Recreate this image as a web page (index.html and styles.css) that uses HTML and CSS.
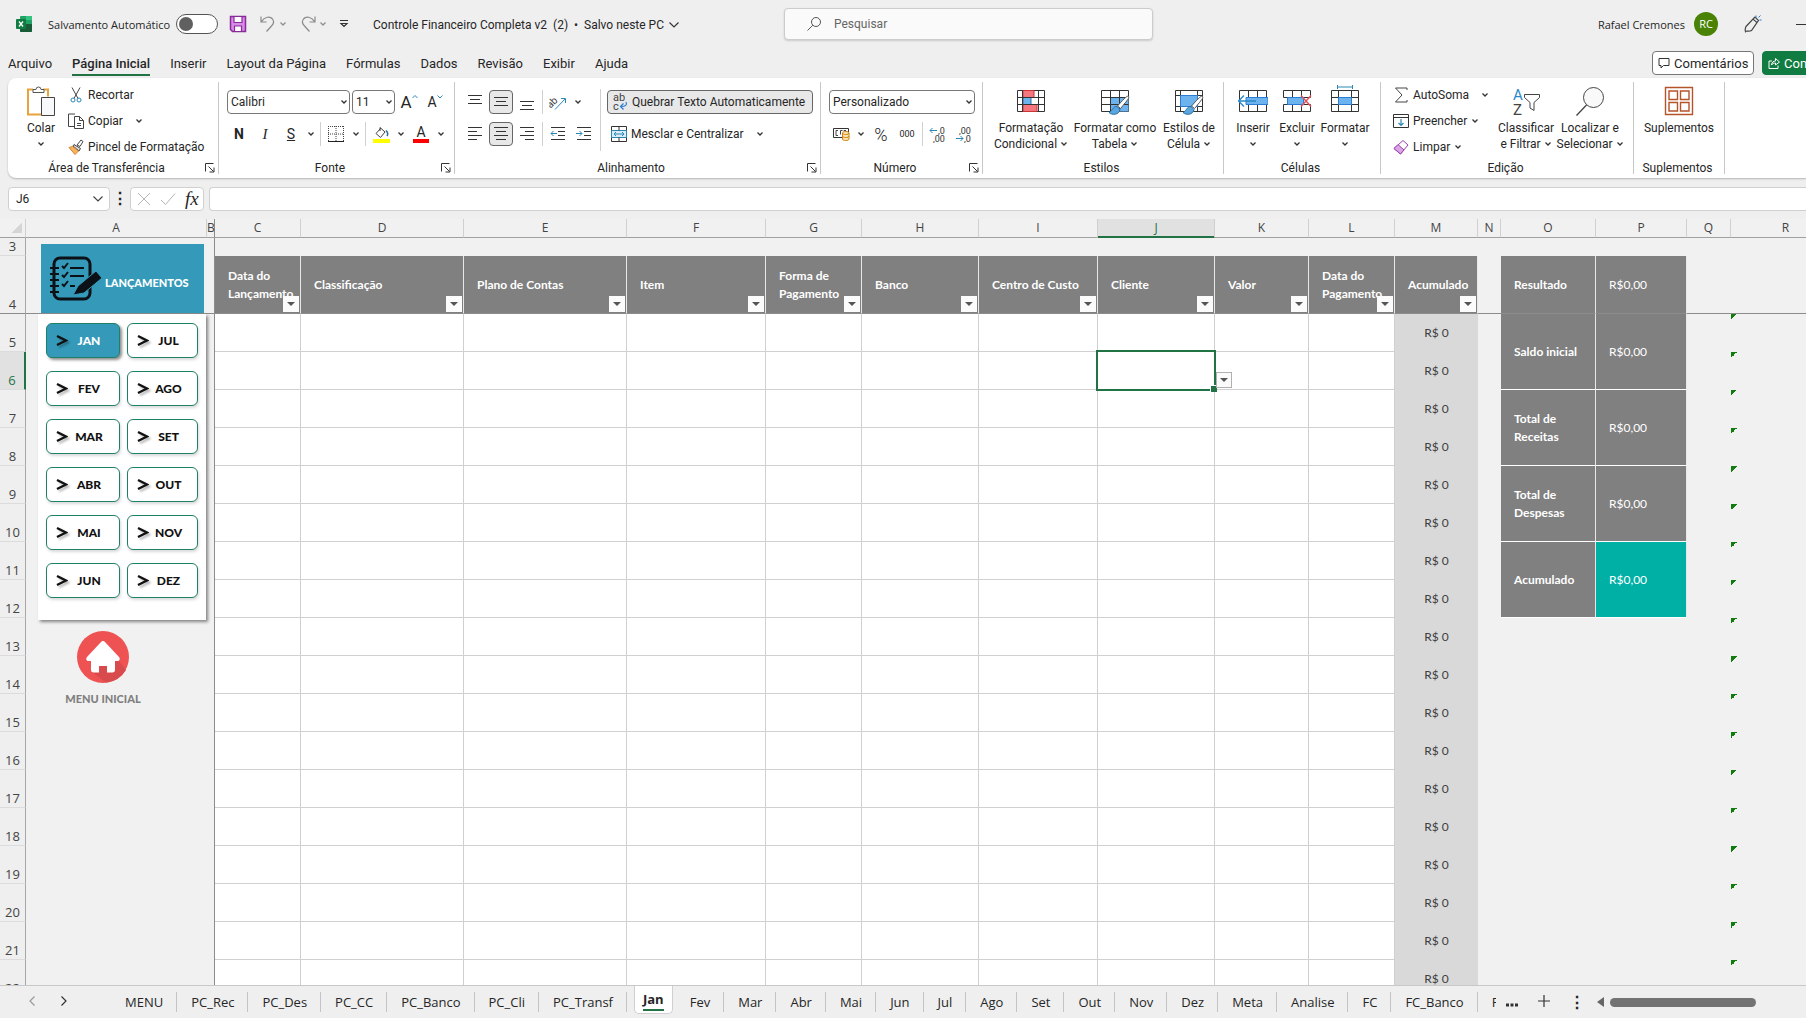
FILE: index.html
```html
<!DOCTYPE html>
<html lang="pt-BR">
<head>
    <meta charset="UTF-8">
    <meta name="viewport" content="width=device-width, initial-scale=1.0">
    <title>Controle Financeiro Completa v2</title>
    <link rel="stylesheet" href="styles.css">
</head>
<body>
    <!-- Shared icons -->
    <svg class="defs" width="0" height="0">
        <symbol id="chev" viewBox="0 0 8 8"><path d="M1.5 2.5 4 5l2.500-2.500" fill="none" stroke="#333" stroke-width="1.300"/></symbol>
        <symbol id="launch" viewBox="0 0 10 10"><path d="M.5 8.500v-8h8M3.500 3.500l5 5M9 4.500V9H4.500" fill="none" stroke="#333"/></symbol>
        <symbol id="arrow" viewBox="0 0 12 14"><path d="M1 2l9 4.500L1 11" fill="none" stroke="#111" stroke-width="2.400"/></symbol>
        <symbol id="brush" viewBox="0 0 22 22"><path d="M20.500 1.500c1 1 0 2.500-8 12l-3-2.500c8-9 10-10.500 11-9.500z" fill="#fff" stroke="#555"/><path d="M9 11.500c-4-.5-4 4-8 6 3 3 10 2.500 11-3z" fill="#5aa7e0" stroke="#2b6ca3"/></symbol>
    </svg>

    <header class="titlebar">
        <svg class="app-icon" width="16" height="16" viewBox="0 0 16 16"><rect x="4" width="12" height="16" rx="1" fill="#21a366"/><path d="M10 0h5a1 1 0 0 1 1 1v3h-6z" fill="#33c481"/><path d="M4 8h12v7a1 1 0 0 1-1 1H5a1 1 0 0 1-1-1z" fill="#185c37"/><rect y="3" width="10" height="10" rx="1" fill="#107c41"/><path d="M3 5.500l4 5M7 5.500l-4 5" stroke="#fff" stroke-width="1.300"/></svg>
        <label class="autosave" for="autosave">Salvamento Automático</label>
        <input class="switch" type="checkbox" role="switch" id="autosave">
        <div class="quick">
            <button aria-label="Salvar"><svg width="18" height="18" viewBox="0 0 18 18"><path d="M1.500 1.500h15v15h-13l-2-2z" fill="#d98be8" stroke="#8a2a9b" stroke-width="1.500"/><path d="M5 1.500h8v6H5zM5.500 11h7v5.500h-7z" fill="#fff" stroke="#8a2a9b" stroke-width="1.200"/></svg></button>
            <button class="split" aria-label="Desfazer"><svg width="18" height="18" viewBox="0 0 18 18"><path d="M2 1.500V7h5.500M2.300 6.700C6 1.500 11 1 13.500 4c2.200 2.800.5 5.500-1 7L7.500 16.500" fill="none" stroke="#8a8a8a" stroke-width="1.200"/></svg><svg class="chev faint"><use href="#chev"/></svg></button>
            <button class="split" aria-label="Refazer"><svg width="18" height="18" viewBox="0 0 18 18"><path d="M16 1.500V7h-5.500M15.700 6.700C12 1.500 7 1 4.500 4c-2.200 2.800-.5 5.500 1 7l5 5.500" fill="none" stroke="#8a8a8a" stroke-width="1.200"/></svg><svg class="chev faint"><use href="#chev"/></svg></button>
            <button aria-label="Personalizar"><svg width="10" height="10" viewBox="0 0 10 10"><path d="M1 1.500h8M2 4.500l3 3 3-3z" fill="none" stroke="#333" stroke-width="1.200"/></svg></button>
        </div>
        <button class="doc">Controle Financeiro Completa v2&nbsp; (2) &nbsp;•&nbsp; Salvo neste PC <svg width="12" height="12" viewBox="0 0 12 12"><path d="M1.500 3.500 6 8l4.500-4.500" fill="none" stroke="#333" stroke-width="1.200"/></svg></button>
        <label class="search">
            <svg width="16" height="16" viewBox="0 0 16 16"><circle cx="10" cy="6" r="4.500" fill="none" stroke="#555"/><path d="M6.800 9.200 1.500 14.500" stroke="#555"/></svg>
            <input type="search" placeholder="Pesquisar" aria-label="Pesquisar">
        </label>
        <div class="account">
            <span>Rafael Cremones</span>
            <span class="avatar">RC</span>
            <svg width="18" height="18" viewBox="0 0 18 18"><path d="M2 11.500 9 4l4 3.500-5.500 8C5.500 17 2 15.500 1.500 16.500 1 15 1.500 12.500 2 11.500zM9 4l2-2 3.500 3.500L13 7.500" fill="none" stroke="#444" stroke-width="1.200"/><path d="M12 .5v2M14.500 2.500l2-2M15.500 5h2" stroke="#2b7cd3"/></svg>
            <span class="minimize"></span>
        </div>
    </header>

    <nav class="tabs">
        <a href="#arquivo">Arquivo</a>
        <a href="#inicio" class="active">Página Inicial</a>
        <a href="#inserir">Inserir</a>
        <a href="#layout">Layout da Página</a>
        <a href="#formulas">Fórmulas</a>
        <a href="#dados">Dados</a>
        <a href="#revisao">Revisão</a>
        <a href="#exibir">Exibir</a>
        <a href="#ajuda">Ajuda</a>
        <div class="tab-actions">
            <button class="comments"><svg width="12" height="12" viewBox="0 0 12 12"><path d="M1 1.500h10v7H5.500L3 11V8.500H1z" fill="none" stroke="#333"/></svg>Comentários</button>
            <button class="share"><svg width="12" height="12" viewBox="0 0 12 12"><path d="M4 4H1v7.500h9V8.500M3.500 8c.3-3 2-4 4-4V1.500L11.500 5 7.500 8V6c-2 0-3 .5-4 2z" fill="none" stroke="#fff"/></svg>Compartilhamento</button>
        </div>
    </nav>

    <section class="ribbon">
        <div class="group clipboard">
            <div class="body">
                <button class="big"><svg class="art" viewBox="0 0 30 32"><path d="M7 4.500H2v25h14M17 4.500h5v7" fill="none" stroke="#e8a33d" stroke-width="2"/><path d="M7 7.500V4.500h3a2.500 2.500 0 0 1 5 0h3v3z" fill="#fff" stroke="#555"/><path d="M15.500 12.500h13v18h-13z" fill="#f7f9fb" stroke="#444"/></svg>Colar<svg class="chev"><use href="#chev"/></svg></button>
                <div class="list">
                    <button><svg width="16" height="16" viewBox="0 0 16 16"><path d="M4 .5l6 11M12 .5l-6 11" stroke="#444"/><circle cx="5" cy="13" r="2" fill="none" stroke="#2b88b5"/><circle cx="11" cy="13" r="2" fill="none" stroke="#2b88b5"/></svg>Recortar</button>
                    <button><svg width="16" height="16" viewBox="0 0 16 16"><path d="M6 13.500H.5V1H7M6.500 3.500h5l4 4v8h-9zM11.500 3.500v4h4M9 10.500h4M9 12.500h4" fill="none" stroke="#444"/></svg>Copiar<svg class="chev far"><use href="#chev"/></svg></button>
                    <button><svg width="16" height="16" viewBox="0 0 16 16"><path d="M9 6l4-5 2 1.500-3 5z" fill="#fff" stroke="#444"/><path d="M6 5.500l6.500 4L11 12 5 7z" fill="#ddd" stroke="#444"/><path d="M4.500 7.500 10.500 12 7 15.500 1 8.500z" fill="#f3b562" stroke="#d9822b"/></svg>Pincel de Formatação</button>
                </div>
            </div>
            <div class="foot"><span>Área de Transferência</span><svg class="launch"><use href="#launch"/></svg></div>
        </div>

        <div class="group font">
            <div class="body rows">
                <div class="row">
                    <span class="field family"><select aria-label="Fonte"><option>Calibri</option></select><svg class="chev"><use href="#chev"/></svg></span>
                    <span class="field size"><select aria-label="Tamanho"><option>11</option></select><svg class="chev"><use href="#chev"/></svg></span>
                    <button class="tool grow" aria-label="Aumentar fonte"><span>A</span><svg width="6" height="6" viewBox="0 0 6 6"><path d="M.5 4 3 1.500 5.500 4" fill="none" stroke="#2b88b5"/></svg></button>
                    <button class="tool shrink" aria-label="Diminuir fonte"><span>A</span><svg width="6" height="6" viewBox="0 0 6 6"><path d="M.5 1.500 3 4l2.500-2.500" fill="none" stroke="#2b88b5"/></svg></button>
                </div>
                <div class="row">
                    <button class="tool bold">N</button>
                    <button class="tool italic">I</button>
                    <button class="tool underline">S</button>
                    <button class="drop" aria-label="Mais sublinhados"><svg class="chev"><use href="#chev"/></svg></button>
                    <i class="sep"></i>
                    <button class="tool" aria-label="Bordas"><svg width="16" height="16" viewBox="0 0 16 16"><path d="M.5 0v15M8 0v15M15.500 0v15M0 .5h16M0 8h16" stroke="#444" stroke-dasharray="1 1"/><path d="M0 15.500h16" stroke="#222"/></svg></button>
                    <button class="drop" aria-label="Mais bordas"><svg class="chev"><use href="#chev"/></svg></button>
                    <i class="sep"></i>
                    <button class="tool" aria-label="Cor de preenchimento"><svg width="17" height="17" viewBox="0 0 17 17"><path d="M8 2 3 7.500l4.500 4L12 6 7 1.500V5" fill="none" stroke="#444"/><path d="M13 4.500c2 2 2 4 1 5.500" fill="none" stroke="#2b6ca3" stroke-width="1.500"/><rect y="13" width="17" height="4" fill="#ff0"/></svg></button>
                    <button class="drop" aria-label="Mais cores"><svg class="chev"><use href="#chev"/></svg></button>
                    <button class="tool color">A</button>
                    <button class="drop" aria-label="Mais cores da fonte"><svg class="chev"><use href="#chev"/></svg></button>
                </div>
            </div>
            <div class="foot"><span>Fonte</span><svg class="launch"><use href="#launch"/></svg></div>
        </div>

        <div class="group align">
            <div class="body">
                <div class="rows">
                    <div class="row">
                        <button class="tool" aria-label="Alinhar em cima"><svg width="16" height="16" viewBox="0 0 16 16"><path d="M1 1.500h14M3 5.500h10M1 9.500h14" stroke="#333"/></svg></button>
                        <button class="tool on" aria-label="Alinhar no meio"><svg width="16" height="16" viewBox="0 0 16 16"><path d="M1 3.500h14M3 7.500h10M1 11.500h14" stroke="#333"/></svg></button>
                        <button class="tool" aria-label="Alinhar embaixo"><svg width="16" height="16" viewBox="0 0 16 16"><path d="M1 7.500h14M3 11.500h10M1 15.500h14" stroke="#333"/></svg></button>
                        <i class="sep"></i>
                        <button class="tool" aria-label="Orientação"><svg width="18" height="16" viewBox="0 0 18 16"><text x="-3" y="10" font-size="10" fill="#444" transform="rotate(-45 5 7)">ab</text><path d="M6 15.500 16 5M12 4.500h4.500V9" fill="none" stroke="#2b88b5"/></svg></button>
                        <button class="drop" aria-label="Mais orientações"><svg class="chev"><use href="#chev"/></svg></button>
                    </div>
                    <div class="row">
                        <button class="tool" aria-label="Alinhar à esquerda"><svg width="16" height="16" viewBox="0 0 16 16"><path d="M1 1.500h14M1 5.500h9M1 9.500h14M1 13.500h9" stroke="#333"/></svg></button>
                        <button class="tool on" aria-label="Centralizar"><svg width="16" height="16" viewBox="0 0 16 16"><path d="M1 1.500h14M3 5.500h10M1 9.500h14M3 13.500h10" stroke="#333"/></svg></button>
                        <button class="tool" aria-label="Alinhar à direita"><svg width="16" height="16" viewBox="0 0 16 16"><path d="M1 1.500h14M6 5.500h9M1 9.500h14M6 13.500h9" stroke="#333"/></svg></button>
                        <i class="sep"></i>
                        <button class="tool" aria-label="Diminuir recuo"><svg width="16" height="16" viewBox="0 0 16 16"><path d="M1 1.500h14M8 5.500h7M8 9.500h7M1 13.500h14" stroke="#333"/><path d="M7 7.500H1M3.500 5 1 7.500 3.500 10" fill="none" stroke="#2b88b5"/></svg></button>
                        <button class="tool" aria-label="Aumentar recuo"><svg width="16" height="16" viewBox="0 0 16 16"><path d="M1 1.500h14M8 5.500h7M8 9.500h7M1 13.500h14" stroke="#333"/><path d="M0 7.500h6M3.500 5 6 7.500 3.500 10" fill="none" stroke="#2b88b5"/></svg></button>
                    </div>
                </div>
                <i class="sep tall"></i>
                <div class="rows">
                    <button class="wide on"><svg width="16" height="18" viewBox="0 0 16 18"><text x="1" y="8" font-size="11" fill="#444">ab</text><text x="1" y="17" font-size="11" fill="#444">c</text><path d="M14 9c1.500 3-.5 4.500-5 4.500M11.500 10.500 8.500 13.500l3 3" fill="none" stroke="#2b7cd3" stroke-width="1.200"/></svg>Quebrar Texto Automaticamente</button>
                    <button class="wide"><svg width="16" height="16" viewBox="0 0 16 16"><path d="M.5.5h15v15H.5z" fill="#fff" stroke="#333"/><path d="M.5 4.500h15v7H.5z" fill="#d9ecf8" stroke="#2b88b5"/><path d="M8 .5v4M8 11.500v4" stroke="#333"/><path d="M3 8h10M5 6 3 8l2 2M11 6l2 2-2 2" fill="none" stroke="#2b88b5"/></svg>Mesclar e Centralizar<svg class="chev far"><use href="#chev"/></svg></button>
                </div>
            </div>
            <div class="foot"><span>Alinhamento</span><svg class="launch"><use href="#launch"/></svg></div>
        </div>

        <div class="group number">
            <div class="body rows">
                <div class="row">
                    <span class="field format"><select aria-label="Formato de número"><option>Personalizado</option></select><svg class="chev"><use href="#chev"/></svg></span>
                </div>
                <div class="row">
                    <button class="tool" aria-label="Contábil"><svg width="17" height="14" viewBox="0 0 17 14"><path d="M9 10.500H.5v-9h15V5" fill="none" stroke="#333"/><path d="M5 3.500H3v5h2M9.500 3.500h-2v4M13 3.500h-2v1" fill="none" stroke="#444"/><path d="M9.500 6v6c0 2 6.500 2 6.500 0V6c0-2-6.500-2-6.500 0zc0 2 6.500 2 6.500 0M9.500 9c0 2 6.500 2 6.500 0" fill="#fde3b0" stroke="#c98414"/></svg></button>
                    <button class="drop" aria-label="Mais moedas"><svg class="chev"><use href="#chev"/></svg></button>
                    <button class="tool percent">%</button>
                    <button class="tool thousand">000</button>
                    <i class="sep"></i>
                    <button class="tool" aria-label="Aumentar casas decimais"><svg width="18" height="17" viewBox="0 0 18 17"><text x="9" y="8" font-size="9" fill="#333">,0</text><text x="4" y="16" font-size="9" fill="#333">,00</text><path d="M8 4.500H1M3.500 2 1 4.500 3.500 7" fill="none" stroke="#2b88b5"/></svg></button>
                    <button class="tool" aria-label="Diminuir casas decimais"><svg width="18" height="17" viewBox="0 0 18 17"><text x="4" y="8" font-size="9" fill="#333">,00</text><text x="9" y="16" font-size="9" fill="#333">,0</text><path d="M1 12.500h7M5.500 10 8 12.500 5.500 15" fill="none" stroke="#2b88b5"/></svg></button>
                </div>
            </div>
            <div class="foot"><span>Número</span><svg class="launch"><use href="#launch"/></svg></div>
        </div>

        <div class="group styles">
            <div class="body">
                <button class="big"><svg class="art" viewBox="0 0 30 32"><path d="M1.500 5.500h27v21h-27z" fill="#fff" stroke="#333"/><path d="M7 5.500h11v7H7zM7 19.500h14v7H7z" fill="#f4777f" stroke="#c33"/><path d="M7 12.500h8v7H7z" fill="#6db3ee" stroke="#2b6ca3"/><path d="M1.500 12.500h27M1.500 19.500h27M6.500 5.500v21M22.500 5.500v21" stroke="#333"/></svg>Formatação<span>Condicional <svg class="chev"><use href="#chev"/></svg></span></button>
                <button class="big"><svg class="art" viewBox="0 0 30 32"><path d="M1.500 5.500h27v21h-27z" fill="#fff" stroke="#333"/><path d="M10 12h18.500v14.500H10z" fill="#6db3ee"/><path d="M1.500 12.500h27M1.500 19.500h27M10.500 5.500v21M19.500 5.500v21" stroke="#333"/><use href="#brush" x="8" y="10" width="22" height="22"/></svg>Formatar como<span>Tabela <svg class="chev"><use href="#chev"/></svg></span></button>
                <button class="big"><svg class="art" viewBox="0 0 30 32"><path d="M1.500 5.500h27v21h-27z" fill="#fff" stroke="#333"/><path d="M1.500 10.500h27M1.500 21.500h27M6.500 5.500v21M23.500 5.500v21" stroke="#333"/><path d="M6.500 10.500h17v11h-17z" fill="#6db3ee" stroke="#2b7cd3"/><use href="#brush" x="8" y="10" width="22" height="22"/></svg>Estilos de<span>Célula <svg class="chev"><use href="#chev"/></svg></span></button>
            </div>
            <div class="foot"><span>Estilos</span></div>
        </div>

        <div class="group cells">
            <div class="body">
                <button class="big"><svg class="art" viewBox="0 0 30 32"><path d="M1.500 5.500h27v21h-27zM10.500 5.500v21M19.500 5.500v21" fill="#fff" stroke="#333"/><path d="M8 12.500h22v7H8z" fill="#6db3ee" stroke="#2b7cd3"/><path d="M18 16H1M6 10.500.5 16 6 21.500" fill="none" stroke="#2b88c9" stroke-width="1.500"/></svg>Inserir<svg class="chev"><use href="#chev"/></svg></button>
                <button class="big narrow"><svg class="art" viewBox="0 0 30 32"><path d="M1.500 12.500v-7h27v7M1.500 19.500v7h27v-7M10.500 5.500v21M19.500 5.500v21M1.500 12.500h27M1.500 19.500h27" fill="none" stroke="#333"/><path d="M5.500 12.500h16v7h-16z" fill="#6db3ee" stroke="#2b7cd3"/><path d="M19 10.500l10 11M29 10.500l-10 11" stroke="#e0525a" stroke-width="1.500"/></svg>Excluir<svg class="chev"><use href="#chev"/></svg></button>
                <button class="big"><svg class="art" viewBox="0 0 30 32"><path d="M1.500 5.500h27v21h-27z" fill="#fff" stroke="#333"/><path d="M1.500 12.500h27M1.500 19.500h27M8.500 5.500v21M21.500 5.500v21" stroke="#333"/><path d="M8.500 12.500h13v7h-13z" fill="#6db3ee" stroke="#2b7cd3"/><path d="M8 2h14M7.500 0v4M22.500 0v4" stroke="#2b88b5"/></svg>Formatar<svg class="chev"><use href="#chev"/></svg></button>
            </div>
            <div class="foot"><span>Células</span></div>
        </div>

        <div class="group editing">
            <div class="body">
                <div class="list">
                    <button><svg width="16" height="16" viewBox="0 0 16 16"><path d="M14 3V1H2.500L9 8l-6.500 7H14v-2" fill="none" stroke="#444"/></svg>AutoSoma<svg class="chev far"><use href="#chev"/></svg></button>
                    <button><svg width="16" height="16" viewBox="0 0 16 16"><path d="M.5 1.500h15v13H.5zM.5 4.500h15" fill="#fff" stroke="#333"/><path d="M8 6v6.500M5.500 10 8 12.500l2.500-2.500" fill="none" stroke="#2b88b5" stroke-width="1.200"/></svg>Preencher<svg class="chev"><use href="#chev"/></svg></button>
                    <button><svg width="16" height="16" viewBox="0 0 16 16"><path d="M10 1.500 15 6l-7.500 9L1 9.500z" fill="#fff" stroke="#9a3fae"/><path d="M5 5.500 11 11l-3.500 4L1 9.500z" fill="#d9a5e3" stroke="#9a3fae"/></svg>Limpar<svg class="chev"><use href="#chev"/></svg></button>
                </div>
                <button class="big"><svg class="art" viewBox="0 0 30 32"><text x="2" y="15" font-size="15" fill="#2b88c9">A</text><text x="2" y="30" font-size="15" fill="#444">Z</text><path d="M13.500 9.500h15v3l-5.500 5v8l-4-2.500v-5.500l-5.500-5z" fill="#fff" stroke="#444"/></svg>Classificar<span>e Filtrar <svg class="chev"><use href="#chev"/></svg></span></button>
                <button class="big"><svg class="art" viewBox="0 0 30 32"><circle cx="18.500" cy="12.500" r="10" fill="#f9f9f9" stroke="#444"/><path d="M11.500 20 1.500 30.500" stroke="#444" stroke-width="1.300"/></svg>Localizar e<span>Selecionar <svg class="chev"><use href="#chev"/></svg></span></button>
            </div>
            <div class="foot"><span>Edição</span></div>
        </div>

        <div class="group addins">
            <div class="body">
                <button class="big"><svg class="art" viewBox="0 0 30 32"><path d="M1.500 2.500h27v27h-27zM5 6h8.500v8.500H5zM16.500 6H25v8.500h-8.500zM5 17.500h8.500V26H5zM16.500 17.500H25V26h-8.500z" fill="none" stroke="#b5532a" stroke-width="1.400"/></svg>Suplementos</button>
            </div>
            <div class="foot"><span>Suplementos</span></div>
        </div>
    </section>

    <section class="formula-bar">
        <label class="name-box"><input type="text" value="J6" aria-label="Caixa de nome"><svg width="12" height="12" viewBox="0 0 12 12"><path d="M1.500 3.500 6 8l4.500-4.500" fill="none" stroke="#444" stroke-width="1.200"/></svg></label>
        <span class="dots">⋮</span>
        <div class="fx">
            <svg width="14" height="14" viewBox="0 0 14 14"><path d="M1 1l12 12M13 1 1 13" stroke="#b5b5b5"/></svg>
            <svg width="16" height="14" viewBox="0 0 16 14"><path d="M1 8l4.500 4.500L15 1.500" fill="none" stroke="#b5b5b5"/></svg>
            <span>fx</span>
        </div>
        <input class="formula" type="text" aria-label="Barra de fórmulas">
    </section>

    <main class="sheet">
        <table>
            <colgroup>
                <col class="w-num"><col class="w-a"><col class="w-b"><col class="w-c"><col class="w-d"><col class="w-d"><col class="w-f"><col class="w-g"><col class="w-h"><col class="w-i"><col class="w-h"><col class="w-k"><col class="w-c"><col class="w-m"><col class="w-n"><col class="w-o"><col class="w-p"><col class="w-q"><col>
            </colgroup>
            <thead>
                <tr class="letters">
                    <th class="corner"></th><th>A</th><th class="freeze">B</th><th>C</th><th>D</th><th>E</th><th>F</th><th>G</th><th>H</th><th>I</th><th class="current">J</th><th>K</th><th>L</th><th>M</th><th>N</th><th>O</th><th>P</th><th>Q</th><th>R</th>
                </tr>
            </thead>
            <tbody id="rows">
                <tr class="row-3">
                    <th>3</th>
                    <td class="freeze pane-end" colspan="2" rowspan="2">
                        <a class="banner" href="#lancamentos">
                            <svg width="54" height="46" viewBox="0 0 54 46"><rect x="5" y="2" width="36" height="41" rx="6" fill="none" stroke="#0b1116" stroke-width="3"/><path d="M1 12h9M1 18h9M1 24h9M1 30h9M1 36h9" stroke="#0b1116" stroke-width="2"/><path d="M13 10l2 2 4-5M13 19l2 2 4-5M13 28l2 2 4-5M21 12h14M21 20h14M21 30h5" fill="none" stroke="#0b1116" stroke-width="2"/><path d="M29 30 47 15l6 7-18 15-11 2z" fill="#0b1116" stroke="#359ab9"/></svg>
                            <span>LANÇAMENTOS</span>
                        </a>
                    </td>
                    <td colspan="16"></td>
                </tr>
                <tr class="row-4">
                    <th>4</th>
                    <td class="head">Data do Lançamento<button class="filter" aria-label="Filtrar"></button></td>
                    <td class="head">Classificação<button class="filter" aria-label="Filtrar"></button></td>
                    <td class="head">Plano de Contas<button class="filter" aria-label="Filtrar"></button></td>
                    <td class="head">Item<button class="filter" aria-label="Filtrar"></button></td>
                    <td class="head">Forma de Pagamento<button class="filter" aria-label="Filtrar"></button></td>
                    <td class="head">Banco<button class="filter" aria-label="Filtrar"></button></td>
                    <td class="head">Centro de Custo<button class="filter" aria-label="Filtrar"></button></td>
                    <td class="head">Cliente<button class="filter" aria-label="Filtrar"></button></td>
                    <td class="head">Valor<button class="filter" aria-label="Filtrar"></button></td>
                    <td class="head">Data do Pagamento<button class="filter" aria-label="Filtrar"></button></td>
                    <td class="head">Acumulado<button class="filter" aria-label="Filtrar"></button></td>
                    <td></td>
                    <td class="label">Resultado</td>
                    <td class="amount">R$0,00</td>
                    <td></td>
                    <td></td>
                </tr>
                <tr>
                    <th>5</th>
                    <td class="freeze" colspan="2" rowspan="18">
                        <nav class="months">
                            <button class="active"><svg><use href="#arrow"/></svg><span>JAN</span></button>
                            <button><svg><use href="#arrow"/></svg><span>JUL</span></button>
                            <button><svg><use href="#arrow"/></svg><span>FEV</span></button>
                            <button><svg><use href="#arrow"/></svg><span>AGO</span></button>
                            <button><svg><use href="#arrow"/></svg><span>MAR</span></button>
                            <button><svg><use href="#arrow"/></svg><span>SET</span></button>
                            <button><svg><use href="#arrow"/></svg><span>ABR</span></button>
                            <button><svg><use href="#arrow"/></svg><span>OUT</span></button>
                            <button><svg><use href="#arrow"/></svg><span>MAI</span></button>
                            <button><svg><use href="#arrow"/></svg><span>NOV</span></button>
                            <button><svg><use href="#arrow"/></svg><span>JUN</span></button>
                            <button><svg><use href="#arrow"/></svg><span>DEZ</span></button>
                        </nav>
                        <a class="home" href="#menu">
                            <svg width="54" height="54" viewBox="0 0 54 54"><circle cx="27" cy="27" r="26" fill="#ee5253"/><path d="M27 30 42 30 50 40A26 26 0 0 1 30 52.500L16 42z" fill="#d84a4c"/><path d="M27 11c1 0 1.500.5 2 1l14 15c1.500 2 .5 4-1.500 4H39v9c0 1.500-1 2.500-2.500 2.500h-5.500V36h-8v6.500h-5.500c-1.500 0-2.500-1-2.500-2.500v-9h-2.500c-2 0-3-2-1.500-4l14-15c.5-.5 1-1 2-1z" fill="#fff"/></svg>
                            MENU INICIAL
                        </a>
                    </td>
                    <td class="cell"></td><td class="cell"></td><td class="cell"></td><td class="cell"></td><td class="cell"></td><td class="cell"></td><td class="cell"></td><td class="cell"></td><td class="cell"></td><td class="cell"></td>
                    <td class="total">R$ 0</td>
                    <td></td>
                    <td class="label" rowspan="2">Saldo inicial</td>
                    <td class="amount" rowspan="2">R$0,00</td>
                    <td></td>
                    <td class="flag"></td>
                </tr>
                <tr>
                    <th class="current">6</th>
                    <td class="cell"></td><td class="cell"></td><td class="cell"></td><td class="cell"></td><td class="cell"></td><td class="cell"></td><td class="cell"></td><td class="cell selected"><span class="outline"></span><button class="pick" aria-label="Escolher cliente"></button></td><td class="cell"></td><td class="cell"></td>
                    <td class="total">R$ 0</td>
                    <td></td>
                    <td></td>
                    <td class="flag"></td>
                </tr>
            </tbody>
        </table>
    </main>

    <footer class="sheet-tabs">
        <div class="arrows">
            <button aria-label="Anterior"><svg width="8" height="12" viewBox="0 0 8 12"><path d="M6.500 1.500 2 6l4.500 4.500" fill="none" stroke="#999" stroke-width="1.200"/></svg></button>
            <button aria-label="Próxima"><svg width="8" height="12" viewBox="0 0 8 12"><path d="M1.500 1.500 6 6l-4.500 4.500" fill="none" stroke="#333" stroke-width="1.200"/></svg></button>
        </div>
        <div class="strip">
            <a href="#menu">MENU</a>
            <a href="#pc-rec">PC_Rec</a>
            <a href="#pc-des">PC_Des</a>
            <a href="#pc-cc">PC_CC</a>
            <a href="#pc-banco">PC_Banco</a>
            <a href="#pc-cli">PC_Cli</a>
            <a href="#pc-transf">PC_Transf</a>
            <a href="#jan" class="active"><span>Jan</span></a>
            <a href="#fev">Fev</a>
            <a href="#mar">Mar</a>
            <a href="#abr">Abr</a>
            <a href="#mai">Mai</a>
            <a href="#jun">Jun</a>
            <a href="#jul">Jul</a>
            <a href="#ago">Ago</a>
            <a href="#set">Set</a>
            <a href="#out">Out</a>
            <a href="#nov">Nov</a>
            <a href="#dez">Dez</a>
            <a href="#meta">Meta</a>
            <a href="#analise">Analise</a>
            <a href="#fc">FC</a>
            <a href="#fc-banco">FC_Banco</a>
            <a href="#f" class="cut">F</a>
        </div>
        <button class="more" aria-label="Mais planilhas"><svg width="12" height="4" viewBox="0 0 12 4"><path d="M0 .5h3v3H0zM4.500.5h3v3h-3zM9 .5h3v3H9z" fill="#333"/></svg></button>
        <button class="add" aria-label="Nova planilha"><svg width="12" height="12" viewBox="0 0 12 12"><path d="M6 0v12M0 6h12" stroke="#333" stroke-width="1.200"/></svg></button>
        <span class="dots">⋮</span>
        <div class="scroll"><svg width="7" height="10" viewBox="0 0 7 10"><path d="M7 0v10L0 5z" fill="#666"/></svg><span class="thumb"></span></div>
    </footer>

    <script src="script.js"></script>
</body>
</html>
```
FILE: styles.css
```css
* {
    box-sizing: border-box;
}

:root {
    --chrome: #efefef;
    --line: #d0d0d0;
    --green: #217346;
    --head: #808080;
}

body {
    margin: 0;
    height: 100vh;
    display: flex;
    flex-direction: column;
    overflow: hidden;
    background: var(--chrome);
    color: #262626;
    font-family: Roboto, "Open Sans", sans-serif;
    font-size: 12px;
}

button {
    border: 0;
    padding: 0;
    background: none;
    color: inherit;
    font: inherit;
    white-space: nowrap;
}

input,
select {
    font: inherit;
    color: inherit;
}

a {
    color: inherit;
    text-decoration: none;
}

svg {
    flex: none;
}

.defs {
    position: absolute;
}

.chev {
    width: 8px;
    height: 8px;
}

.faint {
    opacity: 0.5;
}

.launch {
    width: 10px;
    height: 10px;
}

/* Title bar */
.titlebar {
    display: flex;
    align-items: center;
    height: 48px;
    padding-left: 16px;
    flex: none;
    white-space: nowrap;
}

.autosave,
.account {
    font-family: "Open Sans", "Noto Sans", sans-serif;
    font-size: 11px;
}

.autosave {
    width: 128px;
    margin-left: 16px;
}

.switch {
    appearance: none;
    width: 42px;
    height: 20px;
    margin: 0;
    padding: 2px;
    border: 1px solid #555;
    border-radius: 10px;
    background: #fff;
}

.switch::before {
    content: "";
    display: block;
    width: 14px;
    height: 14px;
    border-radius: 50%;
    background: #606060;
}

.quick {
    display: flex;
    align-items: center;
    gap: 12px;
    width: 144px;
    margin-left: 11px;
}

.quick button {
    display: flex;
    align-items: center;
}

.quick .split {
    gap: 2px;
}

.doc {
    display: flex;
    align-items: center;
    gap: 4px;
    width: 400px;
    padding-top: 1px;
}

.search {
    display: flex;
    align-items: center;
    gap: 12px;
    width: 369px;
    height: 32px;
    margin-left: 11px;
    padding-left: 21px;
    border: 1px solid #ccc;
    border-radius: 4px;
    background: #fafafa;
    box-shadow: 0 1px 2px rgba(0, 0, 0, 0.15);
}

.search input {
    flex: 1;
    min-width: 0;
    border: 0;
    padding: 0;
    background: none;
}

.search input::placeholder {
    color: #666;
}

.account {
    display: flex;
    align-items: center;
    margin-left: auto;
}

.avatar {
    width: 24px;
    height: 24px;
    margin: 0 26px 0 9px;
    border-radius: 50%;
    background: #498205;
    color: #fff;
    line-height: 24px;
    text-align: center;
}

.minimize {
    width: 10px;
    height: 1px;
    margin-left: 34px;
    background: #333;
}

/* Ribbon tabs */
.tabs {
    display: flex;
    align-items: center;
    gap: 20px;
    height: 30px;
    padding-left: 8px;
    flex: none;
    font-size: 13px;
    white-space: nowrap;
}

.tabs a {
    height: 26px;
    line-height: 28px;
}

.tabs .active {
    border-bottom: 2px solid var(--green);
    font-weight: 500;
}

.tab-actions {
    display: flex;
    gap: 8px;
    width: 154px;
    margin-left: auto;
    overflow: hidden;
}

.tab-actions button {
    display: flex;
    align-items: center;
    gap: 4px;
    flex: none;
    height: 24px;
    padding: 0 5px;
    border: 1px solid #777;
    border-radius: 4px;
    background: #fff;
}

.tab-actions .comments {
    width: 102px;
}

.tab-actions .share {
    border-color: #107c41;
    background: #107c41;
    color: #fff;
}

/* Ribbon */
.ribbon {
    display: flex;
    flex: none;
    height: 100px;
    margin-left: 8px;
    padding-top: 4px;
    border-radius: 8px 0 0 8px;
    background: #fff;
    box-shadow: 0 1px 2px rgba(0, 0, 0, 0.25);
}

.group {
    display: flex;
    flex-direction: column;
    flex: none;
    height: 92px;
    border-right: 1px solid #c8c8c8;
}

.clipboard { width: 211px; }
.font { width: 236px; }
.align { width: 366px; }
.number { width: 162px; }
.styles { width: 241px; }
.cells { width: 157px; }
.editing { width: 253px; }
.addins { width: 91px; }

.body {
    display: flex;
    flex: none;
    height: 78px;
}

.rows {
    display: flex;
    flex-direction: column;
    gap: 8px;
    padding-top: 8px;
}

.font .rows,
.number .rows,
.align .rows:first-child {
    padding-left: 8px;
}

.row {
    display: flex;
    align-items: center;
    gap: 2px;
    height: 24px;
}

.foot {
    display: flex;
    align-items: center;
    flex: none;
    height: 16px;
    margin-right: 3px;
}

.foot span {
    flex: 1;
    text-align: center;
}

.big {
    display: flex;
    flex-direction: column;
    align-items: center;
    flex: none;
    width: 50px;
    padding-top: 3px;
    line-height: 16px;
}

.big .art {
    width: 30px;
    height: 32px;
    margin-bottom: 3px;
}

.big > .chev {
    margin-top: 4px;
}

.clipboard .big {
    width: 60px;
    padding-left: 6px;
}

.styles .body {
    padding-left: 6px;
}

.styles .big {
    width: 84px;
}

.styles .big:last-child {
    width: 64px;
}

.cells .body {
    padding-left: 4px;
}

.cells .narrow {
    width: 38px;
}

.cells .big:last-child {
    width: 58px;
}

.editing .list {
    flex: none;
    width: 113px;
    padding-left: 12px;
}

.editing .big {
    width: 64px;
}

.addins .big {
    width: 90px;
}

.list button {
    display: flex;
    align-items: center;
    gap: 4px;
    height: 26px;
}

.far {
    margin-left: 8px;
}

.tool {
    display: flex;
    align-items: center;
    justify-content: center;
    flex: none;
    width: 24px;
    height: 24px;
}

.drop {
    width: 12px;
    height: 24px;
}

.on {
    border: 1px solid #666;
    border-radius: 4px;
    background: #e8e8e8;
}

.sep {
    width: 1px;
    height: 24px;
    margin: 0 1px;
    background: #d0d0d0;
}

.sep.tall {
    height: 62px;
    margin: 7px 6px 0 4px;
}

.field {
    position: relative;
    height: 24px;
}

.field select {
    appearance: none;
    width: 100%;
    height: 24px;
    padding: 0 3px;
    border: 1px solid #777;
    border-radius: 4px;
    background: #fff;
}

.field .chev {
    position: absolute;
    right: 2px;
    top: 8px;
    pointer-events: none;
}

.family { width: 123px; }
.size { width: 43px; }
.format { width: 146px; }

.grow,
.shrink {
    align-items: flex-start;
    line-height: 24px;
}

.grow {
    font-size: 17px;
}

.shrink {
    font-size: 14px;
}

.grow svg,
.shrink svg {
    margin-top: 4px;
}

.bold {
    font-size: 14px;
    font-weight: 700;
}

.italic {
    font-family: "Liberation Serif", serif;
    font-size: 15px;
    font-style: italic;
}

.underline {
    font-size: 14px;
    text-decoration: underline;
}

.color {
    width: 16px;
    height: 17px;
    margin: 0 4px;
    border-bottom: 4px solid #f00;
    font-size: 14px;
    line-height: 14px;
}

.percent {
    font-size: 18px;
    font-weight: 300;
}

.thousand {
    font-size: 9px;
}

.wide {
    display: flex;
    align-items: center;
    gap: 4px;
    height: 24px;
    padding: 0 6px 0 4px;
}

.wide.on {
    width: 206px;
}

/* Formula bar */
.formula-bar {
    display: flex;
    height: 41px;
    padding: 9px 0 8px 8px;
    flex: none;
}

.name-box,
.fx,
.formula {
    height: 24px;
    border: 1px solid var(--line);
    border-radius: 4px;
    background: #fff;
}

.name-box {
    display: flex;
    align-items: center;
    width: 102px;
    padding: 0 5px 0 7px;
}

.name-box input {
    flex: 1;
    min-width: 0;
    padding: 0;
    border: 0;
    background: none;
}

.dots {
    width: 20px;
    text-align: center;
    font-size: 16px;
    font-weight: 700;
    line-height: 24px;
}

.fx {
    display: flex;
    align-items: center;
    gap: 9px;
    width: 74px;
    padding-left: 6px;
}

.fx span {
    font-family: "Liberation Serif", serif;
    font-size: 19px;
    font-style: italic;
    line-height: 20px;
}

.formula {
    flex: 1;
    min-width: 0;
    margin-left: 5px;
    border-right: 0;
    border-radius: 4px 0 0 4px;
}

/* Sheet */
.sheet {
    flex: 1;
    min-height: 0;
    overflow: hidden;
    border-bottom: 1px solid #c8c8c8;
    background: #f1f1f1;
}

table {
    width: 100%;
    min-width: 1841px;
    table-layout: fixed;
    border-collapse: separate;
    border-spacing: 0;
}

.w-num { width: 26px; }
.w-a { width: 181px; }
.w-b { width: 8px; }
.w-c { width: 86px; }
.w-d { width: 163px; }
.w-f { width: 139px; }
.w-g { width: 96px; }
.w-h { width: 117px; }
.w-i { width: 119px; }
.w-k { width: 94px; }
.w-m { width: 83px; }
.w-n { width: 23px; }
.w-o { width: 95px; }
.w-p { width: 91px; }
.w-q { width: 44px; }

th,
td {
    padding: 0;
}

th {
    color: #444;
    font-family: "Open Sans", "Noto Sans", sans-serif;
    font-weight: 400;
}

td {
    font-family: Lato, "Liberation Sans", sans-serif;
}

tr {
    height: 38px;
}

.letters {
    height: 19px;
}

.letters th {
    height: 19px;
    border-right: 1px solid var(--line);
    border-bottom: 1px solid #a0a0a0;
    line-height: 18px;
}

.letters .corner {
    background: linear-gradient(135deg, transparent 50%, #d5d5d5 50%) 12px 4px / 10px 10px no-repeat;
}

.letters .current {
    border-bottom-color: var(--green);
    background: #e1e1e1;
    box-shadow: inset 0 -1px var(--green);
    color: var(--green);
}

tbody th {
    border-right: 1px solid #a6a6a6;
    border-bottom: 1px solid #dcdcdc;
    background: var(--chrome);
    font-size: 13px;
    line-height: 17px;
    vertical-align: bottom;
}

tbody .current {
    border-right: 2px solid var(--green);
    background: #e1e1e1;
    color: var(--green);
}

.row-3 {
    height: 18px;
}

.row-4 {
    height: 58px;
}

.row-4 th,
.row-4 td,
.pane-end {
    border-bottom: 1px solid #8c8c8c;
}

.freeze,
.letters .freeze {
    border-right: 1px solid #8c8c8c;
    vertical-align: top;
}

.head,
.label,
.amount {
    padding-left: 13px;
    border-right: 1px solid #e8e8e8;
    background: var(--head);
    color: #fff;
    line-height: 18px;
    text-align: left;
}

.head,
.label {
    position: relative;
    font-weight: 700;
}

.label,
.amount {
    border-bottom: 1px solid #fff;
}

.accent {
    background: #00b0a5;
}

.filter,
.pick {
    position: absolute;
    right: 1px;
    bottom: 1px;
    width: 16px;
    height: 16px;
    background: #fbfbfb;
}

.filter::after,
.pick::after {
    content: "";
    display: block;
    margin: 0 auto;
    width: 0;
    border: 4px solid transparent;
    border-top-color: #555;
    border-bottom: 0;
}

.cell {
    border-right: 1px solid var(--line);
    border-bottom: 1px solid var(--line);
    background: #fff;
}

.selected {
    position: relative;
}

.outline {
    position: absolute;
    inset: -2px;
    border: 2px solid var(--green);
}

.outline::after {
    content: "";
    position: absolute;
    right: -3px;
    bottom: -3px;
    width: 6px;
    height: 6px;
    border: solid #fff;
    border-width: 1px 0 0 1px;
    background: var(--green);
}

.pick {
    right: -18px;
    bottom: 1px;
    z-index: 1;
    border: 1px solid #b0b0b0;
}

.total {
    padding-bottom: 2px;
    background: #d9d9d9;
    color: #404040;
    text-align: center;
}

.flag {
    background: linear-gradient(135deg, #107c10 50%, transparent 50%) 0 0 / 6px 6px no-repeat;
}

.banner {
    display: flex;
    align-items: center;
    gap: 2px;
    width: 163px;
    height: 69px;
    margin: 6px 0 0 15px;
    padding-left: 8px;
    background: #359ab9;
    color: #fff;
    font-size: 11px;
    font-weight: 900;
}

.banner span {
    padding-top: 8px;
}

.months {
    display: grid;
    grid-template-columns: 74px 71px;
    gap: 13px 7px;
    width: 168px;
    margin-left: 12px;
    padding: 9px 8px 22px;
    background: #fff;
    box-shadow: 2px 2px 3px rgba(0, 0, 0, 0.45);
}

.months button {
    display: flex;
    align-items: center;
    height: 35px;
    padding: 0 9px;
    border: 1px solid #1f8068;
    border-radius: 6px;
    background: #fff;
    box-shadow: 1px 2px 3px rgba(0, 0, 0, 0.15);
    color: #111;
    font-weight: 900;
}

.months svg {
    width: 12px;
    height: 14px;
    filter: drop-shadow(2px 2px 1px rgba(0, 0, 0, 0.3));
}

.months span {
    flex: 1;
    text-align: center;
}

.months .active {
    background: #359ab9;
    box-shadow: 2px 2px 3px rgba(0, 0, 0, 0.45);
    color: #fff;
}

.home {
    display: flex;
    flex-direction: column;
    align-items: center;
    gap: 8px;
    width: 154px;
    margin-top: 10px;
    color: #7f7f7f;
    font-size: 11px;
    font-weight: 900;
}

/* Sheet tabs */
.sheet-tabs {
    display: flex;
    align-items: center;
    height: 32px;
    flex: none;
    font-family: "Open Sans", "Noto Sans", sans-serif;
    font-size: 13px;
    white-space: nowrap;
}

.arrows {
    display: flex;
    gap: 24px;
    width: 111px;
    padding-left: 28px;
    flex: none;
}

.strip {
    display: flex;
    align-self: stretch;
    width: 1385px;
    overflow: hidden;
}

.strip a {
    flex: none;
    height: 20px;
    margin-top: 6px;
    padding: 0 13px 0 14px;
    border-right: 1px solid #c4c4c4;
    line-height: 20px;
}

.strip .active {
    height: 28px;
    margin: 0 3px 0 7px;
    padding: 0 8px;
    border: 1px solid var(--line);
    border-top: 0;
    border-radius: 0 0 5px 5px;
    background: #fff;
    font-weight: 700;
}

.strip .active span {
    display: block;
    height: 25px;
    border-bottom: 2px solid var(--green);
    line-height: 26px;
}

.strip .cut {
    padding-right: 0;
    border: 0;
}

.more {
    margin: 0 20px 0 10px;
}

.add {
    margin-right: 17px;
}

.scroll {
    display: flex;
    align-items: center;
    gap: 6px;
    flex: 1;
    margin-left: 10px;
}

.thumb {
    width: 146px;
    height: 9px;
    border-radius: 5px;
    background: #737373;
}
```
FILE: script.js
```js
const rows = document.getElementById('rows');
const summary = {
    7: 'Total de Receitas',
    9: 'Total de Despesas',
    11: 'Acumulado'
};

for (let n = 7; n <= 22; n++) {
    let html = `<th>${n}</th>`;
    html += '<td class="cell"></td>'.repeat(10);
    html += '<td class="total">R$ 0</td><td></td>';

    if (summary[n]) {
        const accent = n === 11 ? ' accent' : '';
        html += `<td class="label" rowspan="2">${summary[n]}</td>`;
        html += `<td class="amount${accent}" rowspan="2">R$0,00</td>`;
    } else if (n > 12) {
        html += '<td></td><td></td>';
    }

    html += '<td></td><td class="flag"></td>';

    const row = document.createElement('tr');
    row.innerHTML = html;
    rows.appendChild(row);
}
```
